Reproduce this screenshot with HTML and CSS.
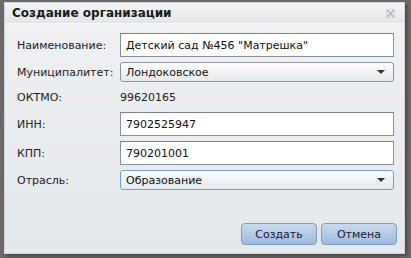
FILE: index.html
```html
<!DOCTYPE html>
<html lang="ru">
<head>
  <meta charset="UTF-8">
  <title>Создание организации</title>
  <link rel="stylesheet" href="styles.css">
</head>
<body>
  <div class="window">
    <div class="window-header">
      <span class="window-title">Создание организации</span>
      <span class="tool-close">
        <svg width="9" height="9" viewBox="0 0 9 9">
          <path d="M1 1 L8 8 M8 1 L1 8" stroke="#b4b8bc" stroke-width="1.6" fill="none"/>
          <rect x="0.5" y="0.5" width="8" height="8" fill="none" stroke="#d2d5d8" stroke-width="1"/>
        </svg>
      </span>
    </div>

    <div class="window-body">
      <div class="form-row">
        <label>Наименование:</label>
        <input class="field" value='Детский сад №456 "Матрешка"'>
      </div>
      <div class="form-row row-combo">
        <label>Муниципалитет:</label>
        <div class="combo"><span>Лондоковское</span><i class="arrow"></i></div>
      </div>
      <div class="form-row row-text">
        <label>ОКТМО:</label>
        <span class="display">99620165</span>
      </div>
      <div class="form-row">
        <label>ИНН:</label>
        <input class="field" value="7902525947">
      </div>
      <div class="form-row">
        <label>КПП:</label>
        <input class="field" value="790201001">
      </div>
      <div class="form-row row-combo">
        <label>Отрасль:</label>
        <div class="combo focused"><span>Образование</span><i class="arrow"></i></div>
      </div>

      <div class="toolbar">
        <button class="btn">Создать</button>
        <button class="btn">Отмена</button>
      </div>
    </div>
  </div>
</body>
</html>
```

FILE: styles.css
```css
html, body {
  margin: 0;
  height: 100%;
}
body {
  background: #6a6a6a;
  font-family: "DejaVu Sans", Verdana, sans-serif;
  font-size: 11px;
  color: #222;
  padding: 2px 0 0 4px;
  box-sizing: border-box;
}

/* Окно */
.window {
  width: 401px;
  height: 252px;
  box-sizing: border-box;
  border: 1px solid #cfd6dd;
  background: #e8ebee;
  display: flex;
  flex-direction: column;
  box-shadow: 2px 2px 3px rgba(0, 0, 0, 0.35);
}
.window-header {
  height: 20px;
  display: flex;
  align-items: center;
  justify-content: space-between;
  padding: 0 9px 0 7px;
  background: linear-gradient(#f3f4f5, #e3e6e9);
  border-bottom: 1px solid #f6f7f8;
}
.window-title {
  font-weight: bold;
  font-size: 12px;
  color: #1a1a1a;
}
.tool-close {
  display: flex;
}
.window-body {
  flex: 1;
  display: flex;
  flex-direction: column;
  padding: 9px 10px 8px 12px;
  background: linear-gradient(#eef0f2, #e5e8eb);
}

/* Строки формы */
.form-row {
  display: flex;
  align-items: center;
  height: 24px;
  margin-bottom: 5px;
}
.form-row.row-combo,
.form-row.row-text {
  height: 20px;
}
.form-row label {
  width: 103px;
  flex: none;
  color: #222;
}
.display {
  color: #222;
}
.field {
  width: 274px;
  height: 24px;
  box-sizing: border-box;
  border: 1px solid #8a9097;
  border-top-color: #7c828a;
  background: #fff;
  padding: 0 5px;
  font-family: inherit;
  font-size: 11px;
  color: #111;
  margin: 0;
}
.combo {
  width: 274px;
  height: 20px;
  box-sizing: border-box;
  border: 1px solid #8d949b;
  border-radius: 3px;
  background: linear-gradient(#fdfdfd, #e6e9ec);
  display: flex;
  align-items: center;
  justify-content: space-between;
  padding: 0 8px 0 5px;
  color: #111;
}
.combo.focused {
  border-color: #6fa3c2;
  background: linear-gradient(#fafcfd, #e3e9ee);
}
.arrow {
  width: 0;
  height: 0;
  border-left: 4px solid transparent;
  border-right: 4px solid transparent;
  border-top: 4px solid #333;
}

/* Кнопки */
.toolbar {
  margin-top: auto;
  margin-right: -3px;
  display: flex;
  justify-content: flex-end;
  gap: 4px;
}
.btn {
  width: 76px;
  height: 22px;
  border: 1px solid #7d9bbf;
  border-radius: 4px;
  background: linear-gradient(#c8daf0, #9dbbe0);
  font-family: inherit;
  font-size: 11px;
  color: #1a1a1a;
  padding: 0;
}
```
